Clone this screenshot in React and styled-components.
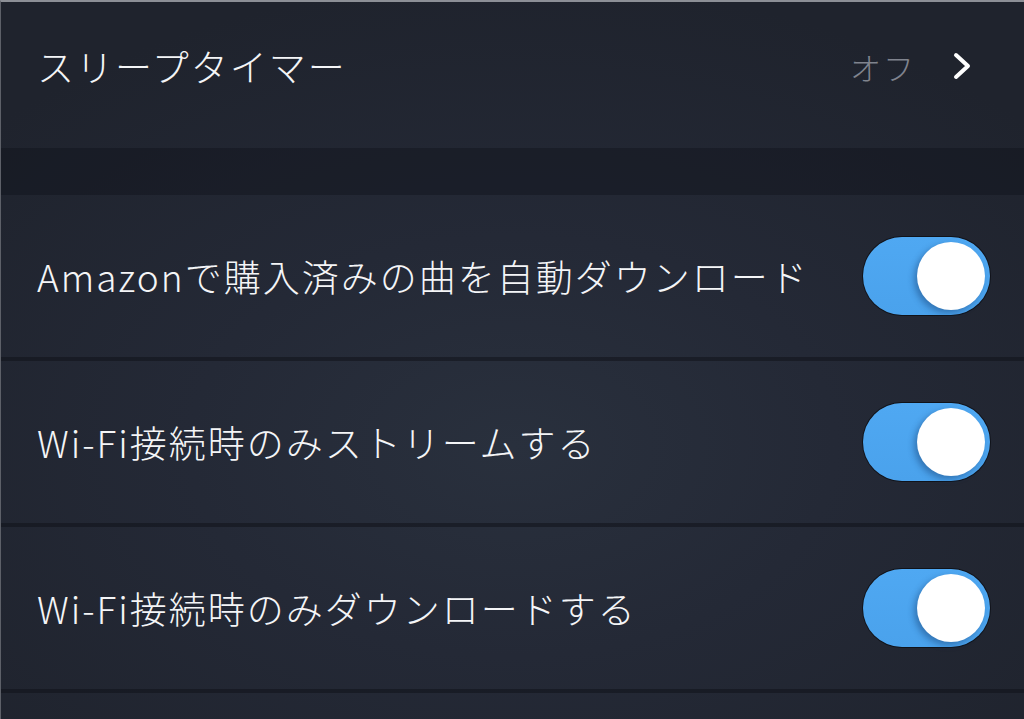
import React from "react";
import styled, { createGlobalStyle } from "styled-components";

const GlobalStyle = createGlobalStyle`
  html, body {
    margin: 0;
    padding: 0;
    background: #1f232d;
  }
  * {
    box-sizing: border-box;
  }
`;

const Screen = styled.div`
  width: 1024px;
  height: 719px;
  overflow: hidden;
  display: flex;
  flex-direction: column;
  border-top: 2px solid #8c8f96;
  border-left: 1px solid #5d6068;
  background: radial-gradient(
    ellipse 70% 65% at 50% 62%,
    #29303d 0%,
    #242936 45%,
    #1f232d 100%
  );
  font-family: "Noto Sans CJK JP", "Noto Sans", sans-serif;
  font-weight: 300;
  color: #f4f5f7;
`;

const Row = styled.div`
  flex: none;
  height: ${(p) => p.height}px;
  display: flex;
  align-items: center;
  padding: ${(p) => p.pad || "0 34px 0 36px"};
  border-bottom: ${(p) => (p.separated ? "4px solid rgba(16, 18, 26, 0.55)" : "none")};
`;

const Label = styled.div`
  flex: 1;
  font-size: 37px;
  letter-spacing: 2px;
  line-height: 1;
  white-space: nowrap;
`;

const Value = styled.div`
  font-size: 31px;
  letter-spacing: 2px;
  color: #80848e;
  margin-right: 36px;
  line-height: 1;
`;

const SectionGap = styled.div`
  flex: none;
  height: 47px;
  background: rgba(14, 16, 24, 0.38);
`;

const Toggle = styled.div`
  position: relative;
  width: 127px;
  height: 78px;
  border-radius: 39px;
  background: linear-gradient(180deg, #4fa8f2 0%, #4aa2ec 100%);
  box-shadow: 0 0 0 1px #10131a;
  flex: none;
`;

const Knob = styled.div`
  position: absolute;
  top: 5px;
  right: 5px;
  width: 68px;
  height: 68px;
  border-radius: 50%;
  background: #ffffff;
  box-shadow: -3px 3px 6px rgba(20, 60, 110, 0.45);
`;

const Chevron = () => (
  <svg width="22" height="28" viewBox="0 0 22 28" style={{ flex: "none" }}>
    <path
      d="M4 3 L16 14 L4 25"
      fill="none"
      stroke="#ffffff"
      strokeWidth="4"
      strokeLinecap="round"
      strokeLinejoin="round"
    />
  </svg>
);

const toggles = [
  "Amazonで購入済みの曲を自動ダウンロード",
  "Wi-Fi接続時のみストリームする",
  "Wi-Fi接続時のみダウンロードする",
];

export default function App() {
  return (
    <>
      <GlobalStyle />
      <Screen>
        <Row height={146} pad="0 50px 18px 36px">
          <Label>スリープタイマー</Label>
          <Value>オフ</Value>
          <Chevron />
        </Row>
        <SectionGap />
        {toggles.map((t) => (
          <Row key={t} height={166} separated>
            <Label>{t}</Label>
            <Toggle>
              <Knob />
            </Toggle>
          </Row>
        ))}
        <Row height={40} />
      </Screen>
    </>
  );
}
